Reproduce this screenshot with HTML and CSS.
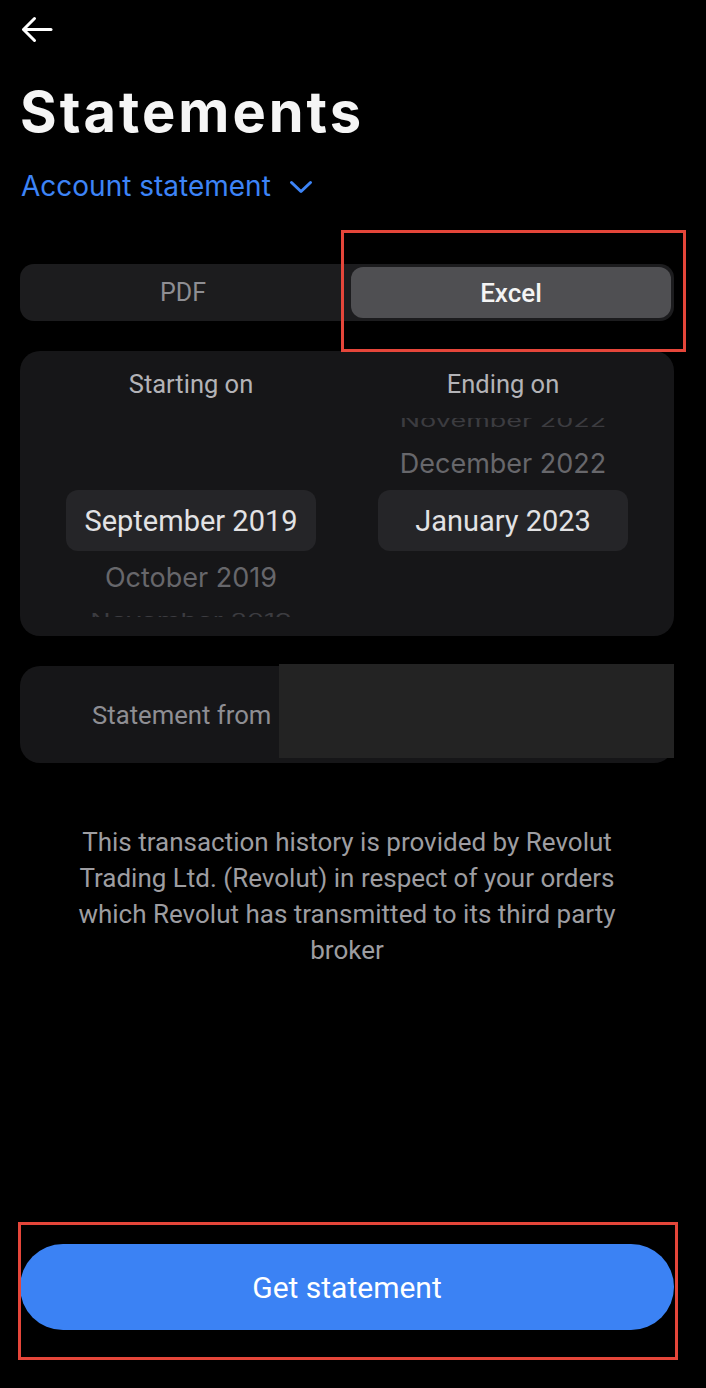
FILE: index.html
```html
<!DOCTYPE html>
<html lang="en">
<head>
<meta charset="utf-8">
<title>Statements</title>
<link rel="stylesheet" href="styles.css">
</head>
<body>
<div class="page">
  <header class="top">
    <button class="back" aria-label="Back">
      <svg width="32" height="27" viewBox="0 0 32 27" fill="none" stroke="#ffffff" stroke-width="3" stroke-linecap="round" stroke-linejoin="round">
        <path d="M30 13.5H3"/>
        <path d="M13.5 2.5L2.5 13.5L13.5 24.5"/>
      </svg>
    </button>
    <h1 class="title">Statements</h1>
    <div class="type-select">
      <span>Account statement</span>
      <svg class="chev" width="24" height="14" viewBox="0 0 24 14" fill="none" stroke="#3d84f7" stroke-width="3" stroke-linecap="round" stroke-linejoin="round">
        <path d="M2.5 2.5L12 11.5L21.5 2.5"/>
      </svg>
    </div>
  </header>

  <div class="segmented">
    <div class="seg">PDF</div>
    <div class="seg seg-active">Excel</div>
    <div class="highlight hl-excel"></div>
  </div>

  <section class="picker">
    <div class="col">
      <div class="col-head">Starting on</div>
      <div class="wheel">
        <div class="row far far-top"></div>
        <div class="row near"></div>
        <div class="row sel"><span class="sel-box">September 2019</span></div>
        <div class="row near">October 2019</div>
        <div class="row far far-bottom">November 2019</div>
      </div>
    </div>
    <div class="col">
      <div class="col-head">Ending on</div>
      <div class="wheel">
        <div class="row far far-top">November 2022</div>
        <div class="row near">December 2022</div>
        <div class="row sel"><span class="sel-box">January 2023</span></div>
        <div class="row near"></div>
        <div class="row far far-bottom"></div>
      </div>
    </div>
  </section>

  <section class="from-card">
    <span class="from-label">Statement from</span>
    <div class="redact"></div>
  </section>

  <p class="note">This transaction history is provided by Revolut<br>Trading Ltd. (Revolut) in respect of your orders<br>which Revolut has transmitted to its third party<br>broker</p>

  <div class="cta-wrap">
    <button class="cta">Get statement</button>
    <div class="highlight hl-cta"></div>
  </div>
</div>
</body>
</html>
```

FILE: styles.css
```css
* { box-sizing: border-box; }

html, body {
  margin: 0;
  padding: 0;
  background: #000000;
}

body {
  font-family: Roboto, "Liberation Sans", sans-serif;
  color: #ffffff;
}

.page {
  position: relative;
  width: 706px;
  min-height: 1388px;
  padding: 0 32px 58px 20px;
  display: flex;
  flex-direction: column;
}

.top {
  display: flex;
  flex-direction: column;
  align-items: flex-start;
}

.back {
  margin: 16px 0 0 1px;
  padding: 0;
  border: 0;
  background: none;
  width: 32px;
  height: 27px;
  display: block;
}
.back svg { display: block; }

.title {
  margin: 39px 0 0 0;
  font-family: Inter, "Noto Sans", sans-serif;
  font-weight: 700;
  font-size: 56px;
  line-height: 60px;
  letter-spacing: 3px;
  color: #f5f5f5;
}

.type-select {
  margin-top: 29px;
  display: flex;
  align-items: center;
  gap: 18px;
  font-family: Inter, "Noto Sans", sans-serif;
  font-size: 28px;
  line-height: 30px;
  color: #3d84f7;
  padding-left: 1px;
}
.chev { display: block; margin-top: 2px; }

.segmented {
  position: relative;
  margin-top: 63px;
  height: 57px;
  width: 654px;
  background: #1c1c1e;
  border-radius: 14px;
  padding: 3px;
  display: grid;
  grid-template-columns: 1fr 1fr;
  gap: 8px;
}

.seg {
  display: flex;
  align-items: center;
  justify-content: center;
  font-size: 25px;
  color: #8e8e93;
  border-radius: 12px;
}

.seg-active {
  background: #4f4f52;
  color: #f4f4f4;
  font-size: 26px;
  font-weight: 500;
}

.highlight {
  position: absolute;
  border: 3px solid #e5463a;
  pointer-events: none;
}

.hl-excel {
  left: 321px;
  top: -34px;
  width: 345px;
  height: 122px;
}

.picker {
  margin-top: 30px;
  width: 654px;
  height: 285px;
  background: #161618;
  border-radius: 20px;
  padding: 20px 15px 0 15px;
  display: grid;
  grid-template-columns: 1fr 1fr;
}

.col {
  display: flex;
  flex-direction: column;
  align-items: center;
}

.col-head {
  font-size: 25.5px;
  line-height: 26px;
  color: #b3b3b7;
}

.wheel {
  margin-top: 21px;
  width: 100%;
  height: 199px;
  overflow: hidden;
  display: flex;
  flex-direction: column;
  align-items: center;
}

.row {
  flex: none;
  width: 100%;
  display: flex;
  align-items: center;
  justify-content: center;
  font-family: Inter, "Noto Sans", sans-serif;
  font-size: 27px;
  white-space: nowrap;
}

.near {
  height: 53px;
  color: #67676b;
}

.far {
  height: 30px;
  color: #3c3c40;
  transform: scaleY(0.62);
}

.far-top {
  margin-top: -12px;
  height: 30px;
}

.wheel .near:nth-child(2) { height: 54px; }

.far-bottom { height: 32px; }

.sel {
  height: 61px;
}

.sel-box {
  width: 250px;
  height: 61px;
  border-radius: 12px;
  background: #252528;
  display: flex;
  align-items: center;
  justify-content: center;
  font-family: Roboto, "Liberation Sans", sans-serif;
  font-size: 29px;
  color: #e2e2e4;
}

.from-card {
  position: relative;
  margin-top: 30px;
  width: 654px;
  height: 97px;
  background: #161618;
  border-radius: 20px;
  display: flex;
  align-items: center;
  padding-left: 72px;
}

.from-label {
  font-size: 25.7px;
  color: #8e8e93;
}

.redact {
  position: absolute;
  left: 259px;
  top: -2px;
  width: 395px;
  height: 94px;
  background: #232323;
}

.note {
  margin: 61px 0 0 0;
  width: 654px;
  text-align: center;
  font-size: 26px;
  line-height: 36px;
  color: #9d9da1;
}

.cta-wrap {
  position: relative;
  margin-top: auto;
  width: 654px;
}

.cta {
  display: flex;
  align-items: center;
  justify-content: center;
  width: 654px;
  height: 86px;
  border: 0;
  border-radius: 43px;
  background: #3b82f4;
  color: #ffffff;
  font-family: Roboto, "Liberation Sans", sans-serif;
  font-size: 30px;
  font-weight: 400;
  padding: 0;
}

.hl-cta {
  left: -2px;
  top: -22px;
  width: 660px;
  height: 138px;
}
```
